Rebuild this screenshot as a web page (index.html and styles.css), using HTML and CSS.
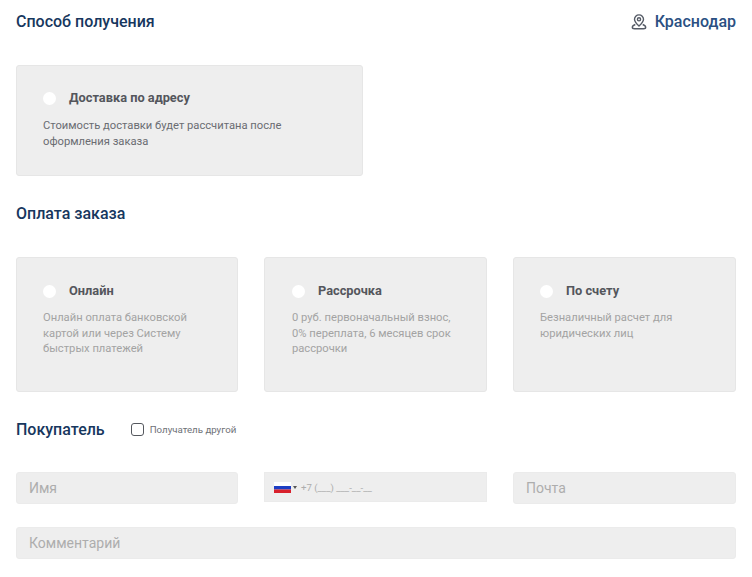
FILE: index.html
```html
<!DOCTYPE html>
<html lang="ru">
<head>
<meta charset="utf-8">
<title>Оформление заказа</title>
<link rel="stylesheet" href="styles.css">
</head>
<body>
<main class="page">
  <header class="head-row">
    <h2 class="title">Способ получения</h2>
    <a class="city">
      <svg class="pin" viewBox="0 0 16 16" width="16" height="16" fill="none" stroke="#555b66" stroke-width="1.4">
        <path d="M8 .9C5.400.9 3.500 2.800 3.500 5.300 3.500 7.800 6 10.300 8 12.100c2-1.800 4.500-4.300 4.500-6.800C12.500 2.800 10.600.9 8 .9z"/>
        <circle cx="8" cy="5.300" r="1.600"/>
        <path d="M4.300 10.500C2.500 11.200 1.300 12.200 1.300 13.300c0 .9 1 1.500 2.200 1.500h9c1.200 0 2.200-.6 2.200-1.500 0-1.100-1.200-2.100-3-2.800"/>
      </svg>
      <span>Краснодар</span>
    </a>
  </header>

  <section class="delivery">
    <div class="card card-delivery">
      <div class="card-top"><span class="radio"></span><span class="card-name">Доставка по адресу</span></div>
      <p class="card-text dark">Стоимость доставки будет рассчитана после оформления заказа</p>
    </div>
  </section>

  <h2 class="title pay-title">Оплата заказа</h2>

  <section class="pay-grid">
    <div class="card card-pay">
      <div class="card-top"><span class="radio"></span><span class="card-name">Онлайн</span></div>
      <p class="card-text">Онлайн оплата банковской картой или через Систему быстрых платежей</p>
    </div>
    <div class="card card-pay">
      <div class="card-top"><span class="radio"></span><span class="card-name">Рассрочка</span></div>
      <p class="card-text">0 руб. первоначальный взнос, 0% переплата, 6 месяцев срок рассрочки</p>
    </div>
    <div class="card card-pay">
      <div class="card-top"><span class="radio"></span><span class="card-name">По счету</span></div>
      <p class="card-text">Безналичный расчет для юридических лиц</p>
    </div>
  </section>

  <div class="buyer-row">
    <h2 class="title">Покупатель</h2>
    <label class="check"><span class="box"></span><span>Получатель другой</span></label>
  </div>

  <section class="form-grid">
    <div class="field">Имя</div>
    <div class="field phone">
      <svg class="flag" viewBox="0 0 17 11" width="17" height="11"><rect width="17" height="4" fill="#fff"/><rect y="4" width="17" height="3.500" fill="#1d3fc4"/><rect y="7.500" width="17" height="3.500" fill="#d8202c"/></svg>
      <span class="caret"></span>
      <span class="mask">+7 (___) ___-__-__</span>
    </div>
    <div class="field">Почта</div>
    <div class="field wide">Комментарий</div>
  </section>
</main>
</body>
</html>
```
FILE: styles.css
```css
* { box-sizing: border-box; }
html, body { margin: 0; background: #fff; }
body { font-family: Roboto, "Liberation Sans", sans-serif; }
.page { width: 752px; height: 577px; overflow: hidden; padding: 12px 16px 0; }
.head-row { display: flex; justify-content: space-between; align-items: center; height: 20px; }
.title { margin: 0; font-size: 16px; line-height: 20px; font-weight: 500; color: #17375e; }
.city { display: flex; align-items: center; gap: 8px; font-size: 16px; line-height: 20px; font-weight: 500; color: #2a5082; }
.pin { display: block; }
.delivery { margin-top: 33px; }
.card { background: #eeeeee; border: 1px solid #e6e6e6; border-radius: 3px; padding: 24px 26px 0; }
.card-delivery { width: 347px; height: 111px; }
.card-top { display: flex; align-items: center; height: 16px; }
.radio { width: 13px; height: 13px; border-radius: 50%; background: #fff; margin-right: 13px; flex: none; }
.card-name { font-size: 12.8px; font-weight: 700; color: #54565c; line-height: 16px; }
.card-text { margin: 12px 0 0; font-size: 11.2px; line-height: 15.5px; color: #a3a3a3; }
.card-text.dark { color: #6a6c72; }
.pay-title { margin-top: 28px; }
.pay-grid { margin-top: 33px; display: grid; grid-template-columns: 222px 223px 223px; column-gap: 26px; }
.card-pay { height: 135px; padding-top: 25px; }
.card-pay .card-text { margin-top: 11px; }
.card-pay:nth-child(2) { padding-left: 27px; }
.buyer-row { display: flex; align-items: center; margin-top: 28px; height: 20px; }
.check { display: flex; align-items: center; gap: 6px; margin-left: 26px; margin-top: -1px; font-size: 9.7px; color: #6e7076; }
.box { width: 13px; height: 13px; border: 1.5px solid #55585e; border-radius: 3px; background: #fff; }
.form-grid { margin-top: 32px; display: grid; grid-template-columns: 222px 223px 223px; column-gap: 26px; row-gap: 23px; }
.field { height: 32px; background: #eeeeee; border: 1px solid #ebebeb; border-radius: 3px; padding: 0 12px; display: flex; align-items: center; font-size: 14px; color: #adadad; }
.phone { height: 30px; border-radius: 0; padding: 0 9px; font-size: 9.6px; }
.wide { grid-column: 1 / -1; }
.flag { display: block; }
.caret { width: 0; height: 0; border-left: 2px solid transparent; border-right: 2px solid transparent; border-top: 3px solid #555; margin: 0 4px 0 2px; }
```
